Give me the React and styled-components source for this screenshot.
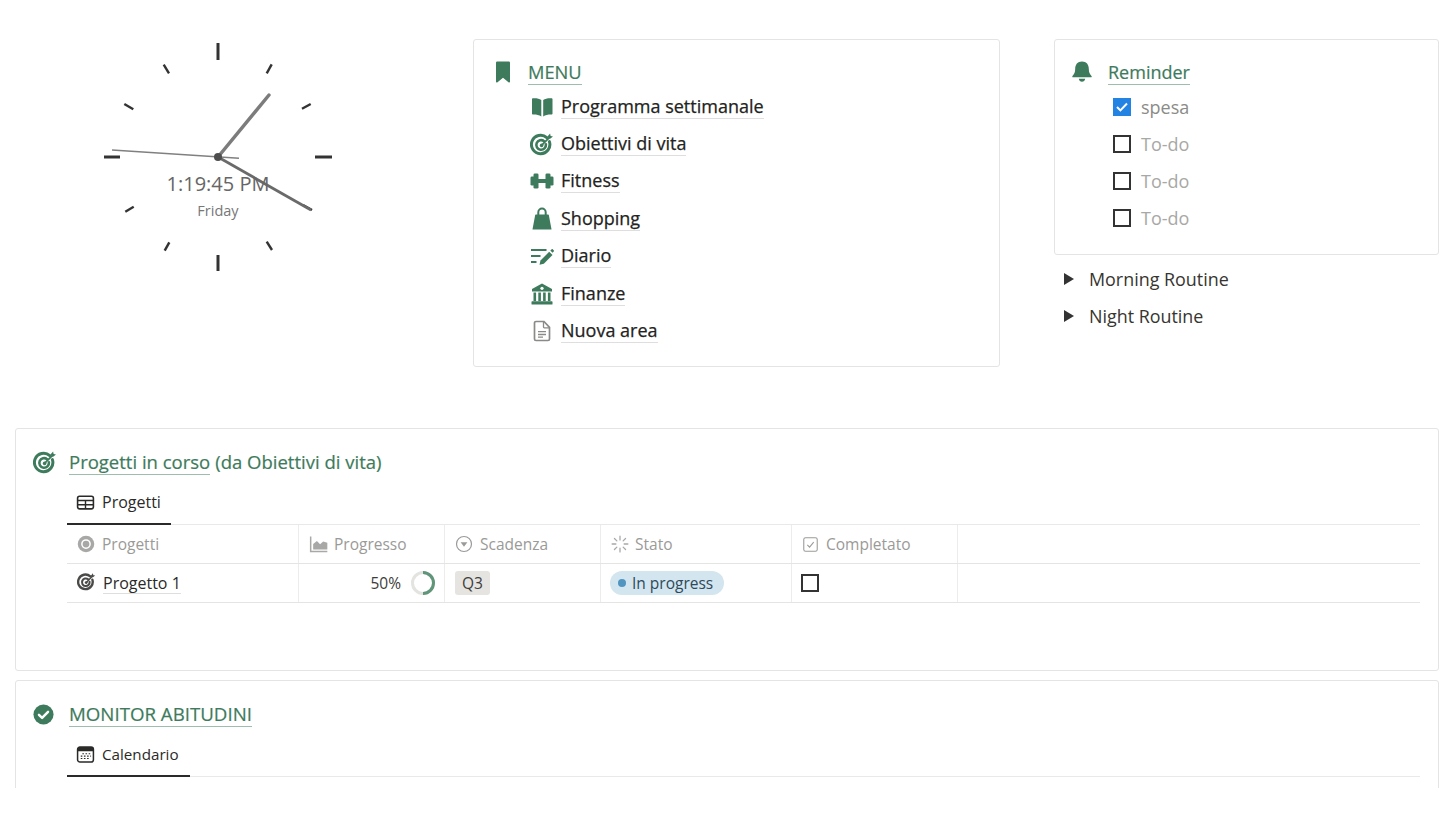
import React from 'react';
import styled, { createGlobalStyle } from 'styled-components';

const green = '#3d7b5c';

const GlobalStyle = createGlobalStyle`
  html, body { margin: 0; padding: 0; background: #fff; }
  body { font-family: "Open Sans", "Noto Sans", sans-serif; color: #2f2f2d; }
`;

const Svg = ({ size = 24, color = green, children }) => (
  <svg width={size} height={size} viewBox="0 0 24 24" fill="none" style={{ color, display: 'block', flex: 'none' }}>
    {children}
  </svg>
);

const BookmarkIcon = (p) => (
  <Svg {...p}><path d="M5 2.800C5 1.900 5.600 1.400 6.400 1.400h11.200c.8 0 1.400.5 1.400 1.400V21.500c0 .9-.9 1.300-1.500.8L12 17.800l-5.500 4.500c-.6.5-1.500.1-1.500-.8z" fill="currentColor" /></Svg>
);
const BookIcon = (p) => (
  <Svg {...p}>
    <path d="M2 4.300C2 3.700 2.500 3.300 3 3.300c3.300-.2 6.300.2 8.300 1.700V21.500C9 20 6 19.500 3 19.600c-.6 0-1-.4-1-1z" fill="currentColor" />
    <path d="M22.500 4.300c0-.6-.5-1-1-1-3.300-.2-6.300.2-8.300 1.700V21.500c2.300-1.500 5.300-2 8.300-1.900.6 0 1-.4 1-1z" fill="currentColor" />
  </Svg>
);
const TargetIcon = (p) => (
  <Svg {...p}>
    <path d="M16.800 5.600A9.200 9.200 0 1 0 19.400 9.600" stroke="currentColor" strokeWidth="3" strokeLinecap="round" />
    <path d="M14.100 9.200A4.800 4.800 0 1 0 15.900 12.400" stroke="currentColor" strokeWidth="2.600" strokeLinecap="round" />
    <circle cx="11.600" cy="13.400" r="1.800" fill="currentColor" />
    <path d="M11.800 13.200L19 5.800" stroke="currentColor" strokeWidth="1.800" strokeLinecap="round" />
    <path d="M17.500 4.600L20.100 1.500L20.600 4L23 4.400L19.800 7z" fill="currentColor" />
  </Svg>
);
const DumbbellIcon = (p) => (
  <Svg {...p}>
    <rect x="0.500" y="7.500" width="4" height="9" rx="1.300" fill="currentColor" />
    <rect x="3.500" y="4.500" width="5" height="15" rx="1.300" fill="currentColor" />
    <rect x="8" y="10" width="8" height="4" fill="currentColor" />
    <rect x="15.500" y="4.500" width="5" height="15" rx="1.300" fill="currentColor" />
    <rect x="19.500" y="7.500" width="4" height="9" rx="1.300" fill="currentColor" />
  </Svg>
);
const BagIcon = (p) => (
  <Svg {...p}>
    <path d="M8.300 8.500V5.300a3.700 3.700 0 0 1 7.400 0V8.500" stroke="currentColor" strokeWidth="2" />
    <path d="M5.800 7.500h12.400c.3 0 .5.200.6.500l2.700 14.500H2.500L5.200 8c.1-.3.300-.5.600-.5z" fill="currentColor" />
  </Svg>
);
const NotesIcon = (p) => (
  <Svg {...p}>
    <path d="M1 6h15.500M1 12h9.500M1 18h5.500" stroke="currentColor" strokeWidth="2" />
    <path d="M9.500 20.800l1-4.300L19.200 7.800l3.300 3.300-8.700 8.700z" fill="currentColor" />
    <path d="M20.300 6.600l1.200-1.200c.4-.4 1-.4 1.400 0l.8.800c.4.400.4 1 0 1.400l-1.200 1.200z" fill="currentColor" />
  </Svg>
);
const BankIcon = (p) => (
  <Svg {...p}>
    <path d="M12 1.500L22 7v2.600H2V7z" fill="currentColor" />
    <circle cx="12" cy="6.300" r="1.600" fill="#fff" />
    <path d="M4.800 10.500v8.500M9.600 10.500v8.500M14.400 10.500v8.500M19.200 10.500v8.500" stroke="currentColor" strokeWidth="2.600" />
    <rect x="1.500" y="19.300" width="21" height="3.200" rx="0.600" fill="currentColor" />
  </Svg>
);
const DocIcon = (p) => (
  <Svg {...p}>
    <path d="M6 2.500h8l5.500 5.800V20c0 .9-.7 1.500-1.500 1.500H6c-.8 0-1.500-.6-1.500-1.500V4c0-.8.700-1.500 1.500-1.500z" stroke="currentColor" strokeWidth="1.700" />
    <path d="M13.500 2.800V8c0 .5.300.8.800.8h5M8 12.700h8M8 15.500h8M8 18.200h5" stroke="currentColor" strokeWidth="1.300" />
  </Svg>
);
const BellIcon = (p) => (
  <Svg {...p}>
    <path d="M12 1.500c4.500 0 6.800 3.200 6.800 7.200 0 3.800 1 5.400 2.700 7.200.5.600.2 1.400-.6 1.400H3.100c-.8 0-1.100-.8-.6-1.400 1.700-1.800 2.700-3.400 2.700-7.200 0-4 2.300-7.200 6.800-7.200z" fill="currentColor" />
    <path d="M8.800 18.800h6.400c-.3 1.900-1.600 3-3.200 3s-2.900-1.100-3.200-3z" fill="currentColor" />
  </Svg>
);
const CheckCircleIcon = (p) => (
  <Svg {...p}>
    <circle cx="12" cy="12" r="11.500" fill="currentColor" />
    <path d="M6.800 12.400l3.600 3.500 6.800-7" stroke="#fff" strokeWidth="2.800" strokeLinecap="round" strokeLinejoin="round" />
  </Svg>
);
const TableIcon = (p) => (
  <Svg {...p}>
    <rect x="2" y="4" width="20" height="16" rx="2.500" stroke="currentColor" strokeWidth="2" />
    <path d="M2 9.500h20M2 14.800h20M12 9.500V20" stroke="currentColor" strokeWidth="1.800" />
  </Svg>
);
const CalendarIcon = (p) => (
  <Svg {...p}>
    <rect x="2" y="2.500" width="20" height="19" rx="3" stroke="currentColor" strokeWidth="1.900" />
    <path d="M2 4.500c0-1 1-2 2-2h16c1 0 2 1 2 2v3.500H2z" fill="currentColor" />
    <path d="M8 11h2M12 11h2M16 11h2M6 14h2M10 14h2M14 14h2M18 14h1M6 17h2M10 17h2M14 17h2" stroke="currentColor" strokeWidth="1.400" />
  </Svg>
);
const DiscIcon = (p) => (
  <Svg {...p}>
    <circle cx="12" cy="12" r="11" fill="currentColor" />
    <circle cx="12" cy="12" r="5.500" stroke="#fff" strokeWidth="2" />
    <circle cx="12" cy="12" r="2" fill="currentColor" />
  </Svg>
);
const ChartIcon = (p) => (
  <Svg {...p}>
    <path d="M2 3v18h20" stroke="currentColor" strokeWidth="1.800" />
    <path d="M5 18.500v-6.500l4.500-3.500 3.800 3.700 3.700-3.200 5 1.500v8z" fill="currentColor" />
  </Svg>
);
const SelectIcon = (p) => (
  <Svg {...p}>
    <circle cx="12" cy="12" r="10" stroke="currentColor" strokeWidth="1.600" />
    <path d="M7.500 9.500h9L12 15.500z" fill="currentColor" />
  </Svg>
);
const StatusIcon = (p) => (
  <Svg {...p}>
    <path d="M12 1.500v5M12 17.500v5M1.500 12h5M17.500 12h5M4.600 4.600l3.200 3.200M16.200 16.200l3.200 3.200M4.600 19.400l3.200-3.200M16.200 7.800l3.200-3.200" stroke="currentColor" strokeWidth="1.700" strokeLinecap="round" />
  </Svg>
);
const CheckboxPropIcon = (p) => (
  <Svg {...p}>
    <rect x="2.500" y="2.500" width="19" height="19" rx="2.500" stroke="currentColor" strokeWidth="1.500" />
    <path d="M7.500 12.500l3.200 3.200 5.800-7" stroke="currentColor" strokeWidth="1.500" />
  </Svg>
);

const Page = styled.div`
  height: 788px;
  overflow: hidden;
  box-sizing: border-box;
  padding: 39px 17px 0 15px;
  background: #fff;
`;

const TopRow = styled.div`
  display: flex;
  align-items: flex-start;
  margin-bottom: 61px;
`;

const ClockPanel = styled.div`
  position: relative;
  flex: none;
  width: 458px;
  height: 328px;
`;

const ClockFace = styled.svg`
  display: block;
  width: 458px;
  height: 328px;
`;

const ClockTime = styled.div`
  position: absolute;
  left: 103px;
  width: 200px;
  top: 131px;
  text-align: center;
  font-size: 20px;
  line-height: 28px;
  color: #666;
`;

const ClockDay = styled.div`
  position: absolute;
  left: 103px;
  width: 200px;
  top: 162px;
  text-align: center;
  font-size: 14.5px;
  line-height: 20px;
  color: #777;
`;

const Card = styled.section`
  box-sizing: border-box;
  border: 1px solid #e4e4e2;
  border-radius: 3px;
  background: #fff;
`;

const MenuCard = styled(Card)`
  flex: none;
  width: 527px;
  height: 328px;
  padding: 17px 0 0 17px;
`;

const SideColumn = styled.div`
  flex: none;
  width: 385px;
  margin-left: 54px;
`;

const ReminderCard = styled(Card)`
  height: 216px;
  padding: 17px 0 0 15px;
`;

const Heading = styled.div`
  display: flex;
  align-items: center;
  height: 30px;
`;

const HeadingIcon = styled.span`
  display: block;
  flex: none;
  width: ${(p) => p.$width}px;
`;

const HeadingLink = styled.span`
  font-size: ${(p) => p.$size || 18}px;
  line-height: 24px;
  font-weight: 500;
  color: ${green};
  -webkit-text-stroke: 0.2px ${green};
  border-bottom: 1px solid rgba(61, 123, 92, 0.5);
`;

const HeadingNote = styled.span`
  font-size: 18.5px;
  line-height: 24px;
  font-weight: 500;
  color: ${green};
  -webkit-text-stroke: 0.2px ${green};
  margin-left: 5px;
`;

const MenuList = styled.div`
  display: flex;
  flex-direction: column;
  padding: 1px 0 0 39px;
`;

const MenuRow = styled.div`
  display: flex;
  align-items: center;
  gap: 7px;
  height: 37.4px;
`;

const MenuLabel = styled.span`
  font-size: 18px;
  line-height: 23px;
  font-weight: 500;
  color: #232321;
  -webkit-text-stroke: 0.25px #232321;
  border-bottom: 1px solid #dedede;
`;

const TodoList = styled.div`
  display: flex;
  flex-direction: column;
  padding: 1px 0 0 43px;
`;

const TodoRow = styled.div`
  display: flex;
  align-items: center;
  gap: 10px;
  height: 37.2px;
`;

const Box = styled.span`
  box-sizing: border-box;
  display: flex;
  align-items: center;
  justify-content: center;
  flex: none;
  width: 18px;
  height: 18px;
  background: ${(p) => (p.$checked ? '#2383e2' : '#fff')};
  border: ${(p) => (p.$checked ? 'none' : '2px solid #333')};
`;

const TodoText = styled.span`
  font-size: 18px;
  color: ${(p) => (p.$checked ? '#8b8b88' : '#a8a8a5')};
`;

const ToggleList = styled.div`
  display: flex;
  flex-direction: column;
  padding: 5px 0 0 10px;
`;

const ToggleRow = styled.div`
  display: flex;
  align-items: center;
  gap: 15px;
  height: 37.4px;
  font-size: 17.9px;
  color: #37352f;
`;

const Triangle = styled.span`
  flex: none;
  width: 0;
  height: 0;
  border-left: 10px solid #333;
  border-top: 6px solid transparent;
  border-bottom: 6px solid transparent;
`;

const BlockCard = styled(Card)`
  padding: 18px 18px 0 17px;
  height: ${(p) => p.$height}px;
  margin-bottom: 9px;
`;

const TabBar = styled.div`
  display: flex;
  margin: 7px 0 0 34px;
  border-bottom: 1px solid #e9e9e7;
`;

const Tab = styled.div`
  display: flex;
  align-items: center;
  gap: 7px;
  height: 36px;
  box-sizing: content-box;
  padding: 0 ${(p) => p.$right}px 3px 9px;
  margin-bottom: -1px;
  border-bottom: 2px solid #2a2a28;
  font-size: ${(p) => p.$size || 16}px;
  font-weight: 500;
  color: #2a2a28;
`;

const GridRow = styled.div`
  display: grid;
  grid-template-columns: 231px 146px 156px 191px 166px 1fr;
  margin-left: 34px;
  height: 39px;
  box-sizing: border-box;
  border-bottom: 1px solid #e4e4e2;
`;

const HeadCell = styled.div`
  display: flex;
  align-items: center;
  gap: ${(p) => p.$gap || 7}px;
  padding-left: 10px;
  font-size: 15.5px;
  color: #9a9a97;
  border-left: ${(p) => (p.$first ? 'none' : '1px solid #ececea')};
`;

const BodyCell = styled.div`
  display: flex;
  align-items: center;
  justify-content: ${(p) => (p.$end ? 'flex-end' : 'flex-start')};
  gap: ${(p) => p.$gap || 0}px;
  padding: ${(p) => (p.$end ? '0 8px 0 0' : `0 0 0 ${p.$left || 10}px`)};
  font-size: 15.5px;
  color: #3d3d3a;
  border-left: ${(p) => (p.$first ? 'none' : '1px solid #ececea')};
`;

const RowIcon = styled.span`
  display: block;
  margin-bottom: 3px;
`;

const RowLink = styled.span`
  font-size: 16px;
  font-weight: 500;
  color: #2a2a28;
  line-height: 20px;
  border-bottom: 1px solid #dedede;
`;

const Tag = styled.span`
  display: inline-flex;
  align-items: center;
  height: 24px;
  padding: 0 7px;
  border-radius: 3px;
  background: #e5e4e1;
`;

const StatusPill = styled.span`
  display: inline-flex;
  align-items: center;
  gap: 6px;
  height: 24px;
  padding: 0 11px 0 8px;
  border-radius: 12px;
  background: #d3e5ef;
  color: #2e4a5b;
`;

const StatusDot = styled.span`
  width: 8px;
  height: 8px;
  border-radius: 50%;
  background: #5094c0;
`;

const ticks = [
  [218, 43, 218, 60, 3], [271.7, 64.3, 266.7, 73.3, 2.4], [310.7, 104, 302, 108.7, 2.4],
  [315, 157, 332, 157, 3], [303, 205, 312, 210, 2.4], [266.7, 241.7, 272, 250, 2.4],
  [218, 255, 218, 271, 3], [169.3, 242.3, 164.7, 250.7, 2.4], [133.7, 206.7, 125.3, 211.7, 2.4],
  [104, 157, 120, 157, 3], [124.3, 104, 133.3, 109.3, 2.4], [163.7, 64.7, 169, 73.3, 2.4],
];

function Clock() {
  return (
    <ClockPanel>
      <ClockFace viewBox="15 39 458 328">
        {ticks.map(([x1, y1, x2, y2, w], i) => (
          <line key={i} x1={x1} y1={y1} x2={x2} y2={y2} stroke="#333" strokeWidth={w} />
        ))}
        <line x1="218" y1="157" x2="269" y2="95" stroke="#7c7c7c" strokeWidth="3.500" strokeLinecap="round" />
        <line x1="218" y1="157" x2="311" y2="210" stroke="#6a6a6a" strokeWidth="2.800" />
        <line x1="112" y1="150" x2="239" y2="158.300" stroke="#808080" strokeWidth="1.600" />
        <circle cx="218" cy="157" r="4" fill="#4d4d4d" />
      </ClockFace>
      <ClockTime>1:19:45 PM</ClockTime>
      <ClockDay>Friday</ClockDay>
    </ClockPanel>
  );
}

const menuItems = [
  ['Programma settimanale', BookIcon],
  ['Obiettivi di vita', TargetIcon],
  ['Fitness', DumbbellIcon],
  ['Shopping', BagIcon],
  ['Diario', NotesIcon],
  ['Finanze', BankIcon],
  ['Nuova area', DocIcon],
];

function Menu() {
  return (
    <MenuCard>
      <Heading>
        <HeadingIcon $width={37}><BookmarkIcon /></HeadingIcon>
        <HeadingLink $size={18.3}>MENU</HeadingLink>
      </Heading>
      <MenuList>
        {menuItems.map(([label, Icon]) => (
          <MenuRow key={label}>
            <Icon color={label === 'Nuova area' ? '#8a8a88' : green} />
            <MenuLabel>{label}</MenuLabel>
          </MenuRow>
        ))}
      </MenuList>
    </MenuCard>
  );
}

function Reminder() {
  return (
    <SideColumn>
      <ReminderCard>
        <Heading>
          <HeadingIcon $width={38}><BellIcon /></HeadingIcon>
          <HeadingLink>Reminder</HeadingLink>
        </Heading>
        <TodoList>
          <TodoRow>
            <Box $checked>
              <svg width="14" height="14" viewBox="0 0 14 14" fill="none">
                <path d="M2 7l3.400 3.400L12 3.500" stroke="#fff" strokeWidth="2" />
              </svg>
            </Box>
            <TodoText $checked>spesa</TodoText>
          </TodoRow>
          {[1, 2, 3].map((n) => (
            <TodoRow key={n}>
              <Box />
              <TodoText>To-do</TodoText>
            </TodoRow>
          ))}
        </TodoList>
      </ReminderCard>
      <ToggleList>
        <ToggleRow><Triangle />Morning Routine</ToggleRow>
        <ToggleRow><Triangle />Night Routine</ToggleRow>
      </ToggleList>
    </SideColumn>
  );
}

function Projects() {
  return (
    <BlockCard $height={243}>
      <Heading>
        <HeadingIcon $width={36}><TargetIcon /></HeadingIcon>
        <HeadingLink $size={18.5}>Progetti in corso</HeadingLink>
        <HeadingNote>(da Obiettivi di vita)</HeadingNote>
      </Heading>
      <TabBar>
        <Tab $right={10}><TableIcon size={19} color="#2a2a28" />Progetti</Tab>
      </TabBar>
      <GridRow>
        <HeadCell $first><DiscIcon size={18} color="#a8a8a6" />Progetti</HeadCell>
        <HeadCell $gap={5}><ChartIcon size={20} color="#a8a8a6" />Progresso</HeadCell>
        <HeadCell><SelectIcon size={18} color="#9a9a97" />Scadenza</HeadCell>
        <HeadCell $gap={6}><StatusIcon size={18} color="#a8a8a6" />Stato</HeadCell>
        <HeadCell><CheckboxPropIcon size={17} color="#9a9a97" />Completato</HeadCell>
        <HeadCell />
      </GridRow>
      <GridRow>
        <BodyCell $first $gap={7}>
          <RowIcon><TargetIcon size={19} color="#4a4a48" /></RowIcon>
          <RowLink>Progetto 1</RowLink>
        </BodyCell>
        <BodyCell $end $gap={9}>
          50%
          <svg width="26" height="26" viewBox="0 0 26 26" fill="none">
            <circle cx="13" cy="13" r="10.500" stroke="#e3e3e0" strokeWidth="3" />
            <path d="M13 2.500a10.500 10.500 0 0 1 0 21" stroke="#5f9679" strokeWidth="3" />
          </svg>
        </BodyCell>
        <BodyCell><Tag>Q3</Tag></BodyCell>
        <BodyCell $left={9}>
          <StatusPill><StatusDot />In progress</StatusPill>
        </BodyCell>
        <BodyCell $left={9}><Box /></BodyCell>
        <BodyCell />
      </GridRow>
    </BlockCard>
  );
}

function Habits() {
  return (
    <BlockCard $height={140}>
      <Heading>
        <HeadingIcon $width={36}><CheckCircleIcon size={21} /></HeadingIcon>
        <HeadingLink $size={18.7}>MONITOR ABITUDINI</HeadingLink>
      </Heading>
      <TabBar>
        <Tab $right={11} $size={15.2}><CalendarIcon size={19} color="#2a2a28" />Calendario</Tab>
      </TabBar>
    </BlockCard>
  );
}

export default function App() {
  return (
    <Page>
      <GlobalStyle />
      <TopRow>
        <Clock />
        <Menu />
        <Reminder />
      </TopRow>
      <Projects />
      <Habits />
    </Page>
  );
}
